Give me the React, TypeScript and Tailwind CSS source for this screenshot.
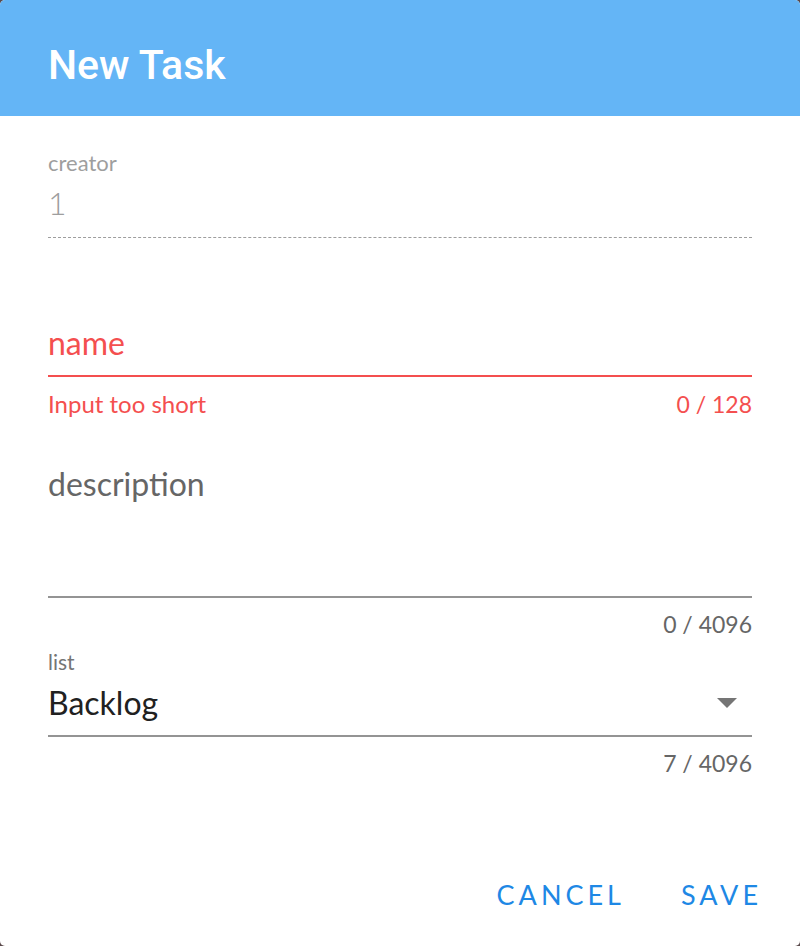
const font = { fontFamily: "Lato, 'Open Sans', sans-serif" };

const Counter = ({ left, right, className }: { left?: string; right: string; className: string }) => (
	<div className={`flex justify-between text-[23px] leading-6 ${className}`}>
		<span className="text-[24px]">{left}</span>
		<span>{right}</span>
	</div>
);

const App = () => {
	return (
		<div className="w-[800px] h-[946px] bg-[#5a4a4c]">
			<div
				className="w-full h-full bg-white rounded-[5px] overflow-hidden flex flex-col"
				style={font}
			>
				<div className="h-[116px] bg-[#64b5f6] flex items-center px-12 shrink-0">
					<h1
						className="text-white text-[41px] leading-[48px] font-medium pt-[13px]"
						style={{ fontFamily: "Roboto, sans-serif" }}
					>
						New Task
					</h1>
				</div>

				<div className="flex flex-col px-12 pt-[35px]">
					{/* creator */}
					<label className="text-[22px] leading-6 text-[#9e9e9e]">creator</label>
					<div className="mt-3 text-[32px] leading-8 text-[#9e9e9e] font-light">1</div>
					<div className="mt-[18px] border-b border-dashed border-[#9e9e9e]" />

					{/* name */}
					<div className="mt-[89px] text-[32px] leading-8 text-[#f44f4f]">name</div>
					<div className="mt-[16px] h-[2px] bg-[#f44f4f]" />
					<Counter left="Input too short" right="0 / 128" className="mt-[15px] text-[#f44f4f]" />

					{/* description */}
					<div className="mt-[52px] text-[32px] leading-8 text-[#666]">description</div>
					<div className="h-[98px] border-b-2 border-[#949494]" />
					<Counter right="0 / 4096" className="mt-[14px] text-[#666]" />

					{/* list */}
					<label className="mt-[14px] text-[21px] leading-6 text-[#757575]">list</label>
					<div className="mt-[13px] flex items-center justify-between">
						<span className="text-[32px] leading-8 text-[#212121]">Backlog</span>
						<svg width="20" height="10" viewBox="0 0 20 10" className="mr-[15px]">
							<path d="M0 0 L20 0 L10 10 Z" fill="#757575" />
						</svg>
					</div>
					<div className="mt-[16px] border-b-2 border-[#949494]" />
					<Counter right="7 / 4096" className="mt-[14px] text-[#666]" />
				</div>

				<div className="mt-auto mb-[31px] flex justify-end items-center pr-[38px] gap-[56px]">
					<button type="button" className="text-[#1e88e5] text-[27px] tracking-[4px]">
						CANCEL
					</button>
					<button type="button" className="text-[#1e88e5] text-[27px] tracking-[4px]">
						SAVE
					</button>
				</div>
			</div>
		</div>
	);
};

export default App;
